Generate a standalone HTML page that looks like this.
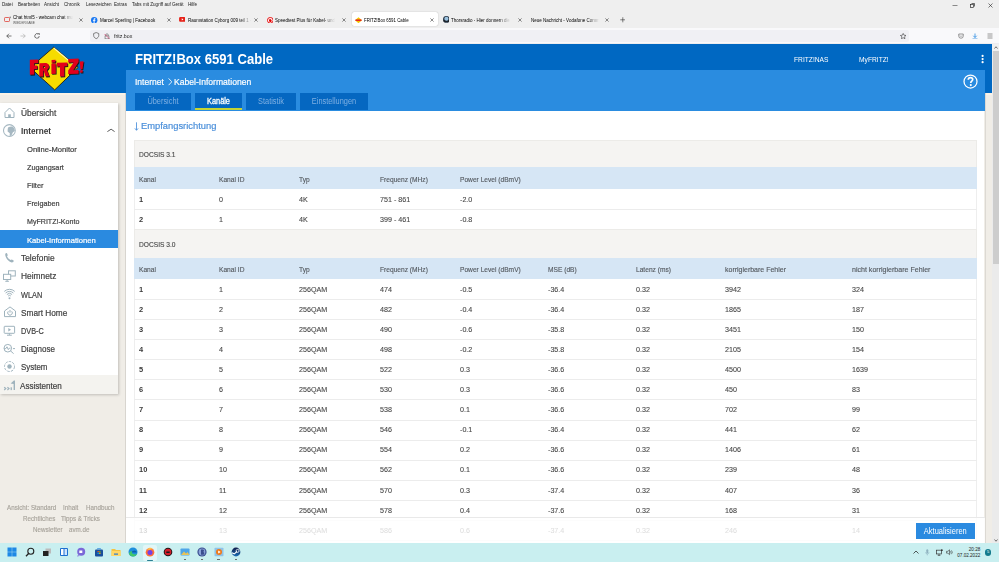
<!DOCTYPE html>
<html><head><meta charset="utf-8">
<style>
*{box-sizing:border-box;margin:0;padding:0}
html,body{width:999px;height:562px;overflow:hidden;background:#f0f0f4;font-family:"Liberation Sans",sans-serif;position:relative}
.a{position:absolute;white-space:nowrap}
</style></head><body>
<div class="a" style="left:0px;top:0px;width:999px;height:28px;background:#efefef;"></div>
<div class="a" style="left:0px;top:28px;width:999px;height:16px;background:#f9f9fb;"></div>
<div class="a" style="left:0px;top:42.6px;width:999px;height:1.4px;background:#ededf0;"></div>
<div class="a" style="left:2.2px;top:1.28px;font-size:5.2px;line-height:6.24px;color:#1a1a1a;font-weight:normal;letter-spacing:0px;transform:scaleX(0.88);transform-origin:0 50%;">Datei</div>
<div class="a" style="left:17.8px;top:1.28px;font-size:5.2px;line-height:6.24px;color:#1a1a1a;font-weight:normal;letter-spacing:0px;transform:scaleX(0.88);transform-origin:0 50%;">Bearbeiten</div>
<div class="a" style="left:44.2px;top:1.28px;font-size:5.2px;line-height:6.24px;color:#1a1a1a;font-weight:normal;letter-spacing:0px;transform:scaleX(0.88);transform-origin:0 50%;">Ansicht</div>
<div class="a" style="left:64.3px;top:1.28px;font-size:5.2px;line-height:6.24px;color:#1a1a1a;font-weight:normal;letter-spacing:0px;transform:scaleX(0.88);transform-origin:0 50%;">Chronik</div>
<div class="a" style="left:85.5px;top:1.28px;font-size:5.2px;line-height:6.24px;color:#1a1a1a;font-weight:normal;letter-spacing:0px;transform:scaleX(0.88);transform-origin:0 50%;">Lesezeichen</div>
<div class="a" style="left:114.3px;top:1.28px;font-size:5.2px;line-height:6.24px;color:#1a1a1a;font-weight:normal;letter-spacing:0px;transform:scaleX(0.88);transform-origin:0 50%;">Extras</div>
<div class="a" style="left:131.7px;top:1.28px;font-size:5.2px;line-height:6.24px;color:#1a1a1a;font-weight:normal;letter-spacing:0px;transform:scaleX(0.88);transform-origin:0 50%;">Tabs mit Zugriff auf Gerät</div>
<div class="a" style="left:188.3px;top:1.28px;font-size:5.2px;line-height:6.24px;color:#1a1a1a;font-weight:normal;letter-spacing:0px;transform:scaleX(0.88);transform-origin:0 50%;">Hilfe</div>
<div class="a" style="left:352px;top:11.9px;width:86px;height:14.4px;background:#ffffff;border-radius:2px;box-shadow:0 0 1.2px rgba(0,0,0,.3)"></div>
<div class="a" style="left:13px;top:13.98px;font-size:5.2px;line-height:6.24px;color:#000;font-weight:normal;letter-spacing:0px;transform:scaleX(0.87);transform-origin:0 50%;"><span style="display:inline-block;max-width:73.8px;overflow:hidden;-webkit-mask-image:linear-gradient(90deg,#000 82%,transparent)">Chat html5 - webcam chat mu</span></div>
<svg class="a" style="left:78.7px;top:17.5px" width="4" height="4" viewBox="0 0 10 10"><path d="M1 1L9 9M9 1L1 9" stroke="#333" stroke-width="1.4"/></svg>
<div class="a" style="left:100px;top:17.48px;font-size:5.2px;line-height:6.24px;color:#000;font-weight:normal;letter-spacing:0px;transform:scaleX(0.875);transform-origin:0 50%;">Marcel Sperling | Facebook</div>
<svg class="a" style="left:166.5px;top:17.5px" width="4" height="4" viewBox="0 0 10 10"><path d="M1 1L9 9M9 1L1 9" stroke="#333" stroke-width="1.4"/></svg>
<div class="a" style="left:187.7px;top:17.48px;font-size:5.2px;line-height:6.24px;color:#000;font-weight:normal;letter-spacing:0px;transform:scaleX(0.87);transform-origin:0 50%;"><span style="display:inline-block;max-width:74.5px;overflow:hidden;-webkit-mask-image:linear-gradient(90deg,#000 82%,transparent)">Raumstation Cyborg 009 teil 1 -</span></div>
<svg class="a" style="left:254px;top:17.5px" width="4" height="4" viewBox="0 0 10 10"><path d="M1 1L9 9M9 1L1 9" stroke="#333" stroke-width="1.4"/></svg>
<div class="a" style="left:275px;top:17.48px;font-size:5.2px;line-height:6.24px;color:#000;font-weight:normal;letter-spacing:0px;transform:scaleX(0.87);transform-origin:0 50%;"><span style="display:inline-block;max-width:75.3px;overflow:hidden;-webkit-mask-image:linear-gradient(90deg,#000 82%,transparent)">Speedtest Plus für Kabel- und</span></div>
<svg class="a" style="left:342px;top:17.5px" width="4" height="4" viewBox="0 0 10 10"><path d="M1 1L9 9M9 1L1 9" stroke="#333" stroke-width="1.4"/></svg>
<div class="a" style="left:363.7px;top:17.48px;font-size:5.2px;line-height:6.24px;color:#000;font-weight:normal;letter-spacing:0px;transform:scaleX(0.84);transform-origin:0 50%;">FRITZ!Box 6591 Cable</div>
<svg class="a" style="left:430px;top:17.5px" width="4" height="4" viewBox="0 0 10 10"><path d="M1 1L9 9M9 1L1 9" stroke="#333" stroke-width="1.4"/></svg>
<div class="a" style="left:451.3px;top:17.48px;font-size:5.2px;line-height:6.24px;color:#000;font-weight:normal;letter-spacing:0px;transform:scaleX(0.87);transform-origin:0 50%;"><span style="display:inline-block;max-width:74.6px;overflow:hidden;-webkit-mask-image:linear-gradient(90deg,#000 82%,transparent)">Thorsradio - Hier donnern die</span></div>
<svg class="a" style="left:517.7px;top:17.5px" width="4" height="4" viewBox="0 0 10 10"><path d="M1 1L9 9M9 1L1 9" stroke="#333" stroke-width="1.4"/></svg>
<div class="a" style="left:530.7px;top:17.48px;font-size:5.2px;line-height:6.24px;color:#000;font-weight:normal;letter-spacing:0px;transform:scaleX(0.87);transform-origin:0 50%;"><span style="display:inline-block;max-width:84.0px;overflow:hidden;-webkit-mask-image:linear-gradient(90deg,#000 82%,transparent)">Neue Nachricht - Vodafone Comm</span></div>
<svg class="a" style="left:605.3px;top:17.5px" width="4" height="4" viewBox="0 0 10 10"><path d="M1 1L9 9M9 1L1 9" stroke="#333" stroke-width="1.4"/></svg>
<div class="a" style="left:13px;top:21.04px;font-size:3.6px;line-height:4.32px;color:#555;font-weight:normal;letter-spacing:0px;transform:scaleX(0.9);transform-origin:0 50%;">WIEDERGABE</div>
<svg class="a" style="left:3.5px;top:16px" width="7" height="7" viewBox="0 0 14 14"><rect x="1" y="3" width="10" height="8" rx="1.5" fill="none" stroke="#e0413a" stroke-width="1.6"/><path d="M11 2l2-1v4z" fill="#333"/></svg>
<svg class="a" style="left:91.4px;top:16.5px" width="6.4" height="6.4" viewBox="0 0 10 10"><circle cx="5" cy="5" r="5" fill="#1877f2"/><path d="M5.6 10V6.4h1.2l.2-1.4H5.6v-.9c0-.4.1-.7.7-.7h.7V2.2c-.1 0-.6-.1-1.1-.1-1.1 0-1.8.7-1.8 1.9V5H3v1.4h1.1V10z" fill="#fff"/></svg>
<svg class="a" style="left:178.5px;top:17.3px" width="6.6" height="4.8" viewBox="0 0 12 9"><rect width="12" height="9" rx="2.2" fill="#e62117"/><path d="M5 2.5v4l3.2-2z" fill="#fff"/></svg>
<svg class="a" style="left:266.8px;top:16.6px" width="6.6" height="6.6" viewBox="0 0 10 10"><circle cx="5" cy="5" r="4.3" fill="#fff" stroke="#e60000" stroke-width="1.4"/><path d="M5.6 2.6C4 2.7 3 3.9 3 5.2c0 1.4 1 2.3 2.2 2.3 1.1 0 1.9-.8 1.9-1.9 0-1.1-.8-1.5-1.5-1.7 0-.5.2-.9 0-1.3z" fill="#e60000"/></svg>
<svg class="a" style="left:354.5px;top:16.5px" width="7" height="6.4" viewBox="0 0 14 12"><path d="M7 0L14 6 7 12 0 6z" fill="#f5c800"/><path d="M1 4.5h12v3H1z" fill="#e31e24"/></svg>
<svg class="a" style="left:442.6px;top:16.3px" width="6.8" height="6.8" viewBox="0 0 10 10"><circle cx="5" cy="5" r="5" fill="#2b3a4a"/><circle cx="5" cy="4" r="3" fill="#9cc3e0"/><path d="M1 6c2 2 6 2 8 0v2H1z" fill="#111"/></svg>
<svg class="a" style="left:619.5px;top:17px" width="5.6" height="5.6" viewBox="0 0 10 10"><path d="M5 0.5v9M0.5 5h9" stroke="#333" stroke-width="1.1"/></svg>
<svg class="a" style="left:951.5px;top:3px" width="6" height="5" viewBox="0 0 12 10"><path d="M1 5h10" stroke="#222" stroke-width="1"/></svg>
<svg class="a" style="left:969.5px;top:2.8px" width="5" height="5" viewBox="0 0 10 10"><rect x="1" y="3" width="6" height="6" fill="none" stroke="#222" stroke-width="1.3"/><path d="M3 1h6v6" fill="none" stroke="#222" stroke-width="1.3"/></svg>
<svg class="a" style="left:987.5px;top:2.8px" width="5" height="5" viewBox="0 0 10 10"><path d="M1 1L9 9M9 1L1 9" stroke="#222" stroke-width="1.2"/></svg>
<svg class="a" style="left:6px;top:33px" width="6" height="6" viewBox="0 0 12 12"><path d="M11 6H1.5M6 1.5L1.5 6 6 10.5" fill="none" stroke="#333" stroke-width="1.3"/></svg>
<svg class="a" style="left:20.3px;top:33px" width="6" height="6" viewBox="0 0 12 12"><path d="M1 6h9.5M6 1.5L10.5 6 6 10.5" fill="none" stroke="#aaa" stroke-width="1.3"/></svg>
<svg class="a" style="left:34.3px;top:33px" width="6" height="6" viewBox="0 0 12 12"><path d="M10.5 6A4.5 4.5 0 1 1 8.5 2.2" fill="none" stroke="#333" stroke-width="1.3"/><path d="M7 0.5h3.5V4" fill="none" stroke="#333" stroke-width="1.3"/></svg>
<div class="a" style="left:90px;top:30px;width:819px;height:12px;background:#f0f0f4;border-radius:2px"></div>
<svg class="a" style="left:93.2px;top:32.4px" width="6.4" height="7.2" viewBox="0 0 8 9"><path d="M4 .7L7.2 1.9V4.3C7.2 6.3 5.8 7.6 4 8.3 2.2 7.6.8 6.3.8 4.3V1.9Z" fill="none" stroke="#555" stroke-width=".9"/></svg>
<svg class="a" style="left:104.2px;top:33px" width="6" height="6.4" viewBox="0 0 12 13"><rect x="2" y="6" width="8" height="6" fill="none" stroke="#555" stroke-width="1.1"/><path d="M3.5 6V4a2.5 2.5 0 0 1 5 0v2" fill="none" stroke="#555" stroke-width="1.1"/><path d="M1 2L11 12" stroke="#e0245e" stroke-width="1.2"/></svg>
<div class="a" style="left:114px;top:32.72px;font-size:5.8px;line-height:6.96px;color:#222;font-weight:normal;letter-spacing:0px;transform:scaleX(0.9);transform-origin:0 50%;">fritz.box</div>
<svg class="a" style="left:899.5px;top:32.5px" width="6.4" height="6.4" viewBox="0 0 12 12"><path d="M6 .8l1.6 3.4 3.7.4-2.8 2.5.8 3.7L6 8.9 2.7 10.8l.8-3.7L.7 4.6l3.7-.4z" fill="none" stroke="#333" stroke-width="1.1"/></svg>
<svg class="a" style="left:958.3px;top:32.8px" width="6" height="6" viewBox="0 0 12 12"><path d="M1.5 2h9v4a4.5 4.5 0 0 1-9 0z" fill="none" stroke="#555" stroke-width="1.2"/><path d="M4 5l2 2 2-2" fill="none" stroke="#555" stroke-width="1.2"/></svg>
<svg class="a" style="left:972.3px;top:32.5px" width="6" height="6.5" viewBox="0 0 12 13"><path d="M6 1v8M2.5 5.5L6 9l3.5-3.5M1 12h10" fill="none" stroke="#0b7be0" stroke-width="1.4"/></svg>
<svg class="a" style="left:986.5px;top:33px" width="6" height="6" viewBox="0 0 12 12"><path d="M1 2h10M1 6h10M1 10h10" stroke="#555" stroke-width="1.2"/></svg>
<div class="a" style="left:0px;top:44px;width:992px;height:499px;background:#f0ede7;"></div>
<div class="a" style="left:0px;top:44px;width:992px;height:49px;background:#0068c2;"></div>
<div class="a" style="left:0px;top:93px;width:126px;height:1.8px;background:#faf2e6;"></div>
<div class="a" style="left:985px;top:93px;width:7px;height:1.8px;background:#faf2e6;"></div>
<svg class="a" style="left:24px;top:45px" width="64" height="48" viewBox="0 0 64 48">
<path d="M29.8 2.1 L54.2 22.3 L30.7 44.9 L6.1 22.7 Z" fill="#f6dc00" stroke="#1a1a1a" stroke-width="0.9"/>
<path d="M29.8 3 L52.5 22" stroke="#fff7b0" stroke-width="1.1" fill="none"/>
<g transform="translate(0.8,0.9)" fill="#1a1a1a">
<path d="M5.8 14.7 L14.3 14.4 L14.3 18.1 L10.2 18.3 L10.2 20.5 L13.3 20.4 L13.3 23.9 L10.2 24 L10.2 29.6 L5.8 29.8 Z"/>
<path d="M15.3 18.2 L21 18 C24.8 18 25.3 20.8 24.8 22.6 C24.4 23.8 23.7 24.5 22.9 24.9 L25.4 31.3 L21.6 31.5 L19.8 25.8 L19.3 25.8 L19.3 31.5 L15.3 31.6 Z M19.3 21 L19.3 23.2 L20.4 23.1 C21.3 23 21.3 20.9 20.4 20.9 Z"/>
<path d="M27.4 18.6 L31.8 18.4 L31.8 28.7 L27.4 28.9 Z M27.6 15 L31.6 14.8 L31.4 17.6 L27.5 17.8 Z"/>
<path d="M32.8 17.8 L43.4 17.6 L43.4 21.2 L40.4 21.3 L40.4 31.4 L36 31.6 L36 21.4 L32.8 21.5 Z"/>
<path d="M44.2 13.9 L54.6 13.6 L54.6 17.1 L49.2 25.2 L54.6 25 L54.6 28.7 L44.2 29 L44.2 25.5 L49.6 17.4 L44.2 17.6 Z"/>
<path d="M55.8 16.6 L59.6 16.3 L58.5 24.2 L56.4 24.4 Z M56.2 25.3 L58.7 25.1 L58.6 27.5 L56.1 27.7 Z"/>
</g>
<g fill="#e2001a">
<path d="M5.8 14.7 L14.3 14.4 L14.3 18.1 L10.2 18.3 L10.2 20.5 L13.3 20.4 L13.3 23.9 L10.2 24 L10.2 29.6 L5.8 29.8 Z"/>
<path d="M15.3 18.2 L21 18 C24.8 18 25.3 20.8 24.8 22.6 C24.4 23.8 23.7 24.5 22.9 24.9 L25.4 31.3 L21.6 31.5 L19.8 25.8 L19.3 25.8 L19.3 31.5 L15.3 31.6 Z M19.3 21 L19.3 23.2 L20.4 23.1 C21.3 23 21.3 20.9 20.4 20.9 Z"/>
<path d="M27.4 18.6 L31.8 18.4 L31.8 28.7 L27.4 28.9 Z M27.6 15 L31.6 14.8 L31.4 17.6 L27.5 17.8 Z"/>
<path d="M32.8 17.8 L43.4 17.6 L43.4 21.2 L40.4 21.3 L40.4 31.4 L36 31.6 L36 21.4 L32.8 21.5 Z"/>
<path d="M44.2 13.9 L54.6 13.6 L54.6 17.1 L49.2 25.2 L54.6 25 L54.6 28.7 L44.2 29 L44.2 25.5 L49.6 17.4 L44.2 17.6 Z"/>
<path d="M55.8 16.6 L59.6 16.3 L58.5 24.2 L56.4 24.4 Z M56.2 25.3 L58.7 25.1 L58.6 27.5 L56.1 27.7 Z"/>
</g></svg>
<div class="a" style="left:135px;top:50.70px;font-size:14px;line-height:16.80px;color:#ffffff;font-weight:bold;letter-spacing:0px;transform:scaleX(0.934);transform-origin:0 50%;">FRITZ!Box 6591 Cable</div>
<div class="a" style="left:793.6px;top:54.64px;font-size:7.6px;line-height:9.12px;color:#ffffff;font-weight:normal;letter-spacing:0px;transform:scaleX(0.88);transform-origin:0 50%;">FRITZ!NAS</div>
<div class="a" style="left:859px;top:54.64px;font-size:7.6px;line-height:9.12px;color:#ffffff;font-weight:normal;letter-spacing:0px;transform:scaleX(0.88);transform-origin:0 50%;">MyFRITZ!</div>
<svg class="a" style="left:980px;top:53px" width="5" height="11" viewBox="0 0 5 11"><circle cx="2.6" cy="2.9" r="1.1" fill="#fff"/><circle cx="2.6" cy="6.1" r="1.1" fill="#fff"/><circle cx="2.6" cy="9.2" r="1.1" fill="#fff"/></svg>
<div class="a" style="left:126px;top:70px;width:858.6px;height:40.6px;background:#2a8ce0;"></div>
<div class="a" style="left:135px;top:75.98px;font-size:9.7px;line-height:11.64px;color:#ffffff;font-weight:normal;letter-spacing:0px;transform:scaleX(0.88);transform-origin:0 50%;-webkit-text-stroke:0.2px #fff;">Internet</div>
<div class="a" style="left:174px;top:75.98px;font-size:9.7px;line-height:11.64px;color:#ffffff;font-weight:normal;letter-spacing:0px;transform:scaleX(0.885);transform-origin:0 50%;-webkit-text-stroke:0.2px #fff;">Kabel-Informationen</div>
<svg class="a" style="left:168px;top:78px" width="4.4" height="7.6" viewBox="0 0 4.4 7.6"><path d="M.6 .4L3.8 3.8 .6 7.2" fill="none" stroke="#fff" stroke-width="0.85"/></svg>
<svg class="a" style="left:963.1px;top:73.6px" width="15" height="15" viewBox="0 0 15 15"><circle cx="7.5" cy="7.5" r="6.5" fill="none" stroke="#fff" stroke-width="1.25"/><path d="M5.3 5.8C5.3 4.4 6.3 3.7 7.5 3.7c1.3 0 2.2.8 2.2 1.9 0 1.5-1.9 1.6-1.9 3.1v.3" fill="none" stroke="#fff" stroke-width="1.7"/><circle cx="7.8" cy="11.1" r="1.05" fill="#fff"/></svg>
<div class="a" style="left:135px;top:93.2px;width:56px;height:17.1px;background:#0567c1;"></div>
<div class="a" style="left:135px;top:95.5px;width:56px;text-align:center;font-size:8.4px;line-height:11px;color:#7fb0e3;transform:scaleX(0.88);">Übersicht</div>
<div class="a" style="left:195px;top:93.2px;width:47px;height:17.1px;background:#0567c1;"></div>
<div class="a" style="left:195px;top:95.5px;width:47px;text-align:center;font-size:8.4px;line-height:11px;color:#ffffff;transform:scaleX(0.88);-webkit-text-stroke:0.3px #fff;">Kanäle</div>
<div class="a" style="left:195px;top:108.1px;width:47px;height:2.1px;background:#c4d334;"></div>
<div class="a" style="left:246px;top:93.2px;width:50px;height:17.1px;background:#0567c1;"></div>
<div class="a" style="left:246px;top:95.5px;width:50px;text-align:center;font-size:8.4px;line-height:11px;color:#7fb0e3;transform:scaleX(0.88);">Statistik</div>
<div class="a" style="left:300px;top:93.2px;width:68px;height:17.1px;background:#0567c1;"></div>
<div class="a" style="left:300px;top:95.5px;width:68px;text-align:center;font-size:8.4px;line-height:11px;color:#7fb0e3;transform:scaleX(0.88);">Einstellungen</div>
<div class="a" style="left:126px;top:110.6px;width:858.4px;height:432.4px;background:#ffffff;"></div>
<div class="a" style="left:125px;top:93px;width:1px;height:450px;background:#d8d5cf;"></div>
<div class="a" style="left:985px;top:93px;width:1px;height:450px;background:#dcd9d3;"></div>
<div class="a" style="left:141.2px;top:120.28px;font-size:9.7px;line-height:11.64px;color:#4a8fda;font-weight:normal;letter-spacing:0px;transform:scaleX(0.965);transform-origin:0 50%;-webkit-text-stroke:0.2px #4a8fda;">Empfangsrichtung</div>
<svg class="a" style="left:134px;top:122.2px" width="5" height="9" viewBox="0 0 5 9"><path d="M2.5 .3V8.1M.9 6.4L2.5 8.3 4.1 6.4" fill="none" stroke="#4a8fda" stroke-width="0.85"/></svg>
<div class="a" style="left:134px;top:139.8px;width:843px;height:27.599999999999994px;background:#f5f4f2;border:1px solid #ecebe8;border-bottom:none"></div>
<div class="a" style="left:139px;top:149.82px;font-size:7.8px;line-height:9.36px;color:#4a4a4a;font-weight:normal;letter-spacing:0px;transform:scaleX(0.85);transform-origin:0 50%;-webkit-text-stroke:0.15px #4a4a4a;">DOCSIS 3.1</div>
<div class="a" style="left:134px;top:167.4px;width:843px;height:21.900000000000006px;background:#d6e6f5;"></div>
<div class="a" style="left:139px;top:174.57px;font-size:7.8px;line-height:9.36px;color:#555a60;font-weight:normal;letter-spacing:0px;transform:scaleX(0.85);transform-origin:0 50%;-webkit-text-stroke:0.15px #555a60;">Kanal</div>
<div class="a" style="left:219px;top:174.57px;font-size:7.8px;line-height:9.36px;color:#555a60;font-weight:normal;letter-spacing:0px;transform:scaleX(0.85);transform-origin:0 50%;-webkit-text-stroke:0.15px #555a60;">Kanal ID</div>
<div class="a" style="left:299px;top:174.57px;font-size:7.8px;line-height:9.36px;color:#555a60;font-weight:normal;letter-spacing:0px;transform:scaleX(0.85);transform-origin:0 50%;-webkit-text-stroke:0.15px #555a60;">Typ</div>
<div class="a" style="left:379.7px;top:174.57px;font-size:7.8px;line-height:9.36px;color:#555a60;font-weight:normal;letter-spacing:0px;transform:scaleX(0.85);transform-origin:0 50%;-webkit-text-stroke:0.15px #555a60;">Frequenz (MHz)</div>
<div class="a" style="left:460px;top:174.57px;font-size:7.8px;line-height:9.36px;color:#555a60;font-weight:normal;letter-spacing:0px;transform:scaleX(0.85);transform-origin:0 50%;-webkit-text-stroke:0.15px #555a60;">Power Level (dBmV)</div>
<div class="a" style="left:134px;top:189.3px;width:843px;height:20px;background:#ffffff;border-left:1px solid #eeeeee;border-right:1px solid #eeeeee"></div>
<div class="a" style="left:139px;top:194.94px;font-size:8.1px;line-height:9.72px;color:#3a3a3a;font-weight:bold;letter-spacing:0px;transform:scaleX(0.92);transform-origin:0 50%;">1</div>
<div class="a" style="left:219px;top:194.94px;font-size:8.1px;line-height:9.72px;color:#484848;font-weight:normal;letter-spacing:0px;transform:scaleX(0.885);transform-origin:0 50%;-webkit-text-stroke:0.12px #484848;">0</div>
<div class="a" style="left:299px;top:194.94px;font-size:8.1px;line-height:9.72px;color:#484848;font-weight:normal;letter-spacing:0px;transform:scaleX(0.885);transform-origin:0 50%;-webkit-text-stroke:0.12px #484848;">4K</div>
<div class="a" style="left:379.7px;top:194.94px;font-size:8.1px;line-height:9.72px;color:#484848;font-weight:normal;letter-spacing:0px;transform:scaleX(0.885);transform-origin:0 50%;-webkit-text-stroke:0.12px #484848;">751 - 861</div>
<div class="a" style="left:460px;top:194.94px;font-size:8.1px;line-height:9.72px;color:#484848;font-weight:normal;letter-spacing:0px;transform:scaleX(0.885);transform-origin:0 50%;-webkit-text-stroke:0.12px #484848;">-2.0</div>
<div class="a" style="left:134px;top:209.4px;width:843px;height:19.6px;background:#ffffff;border-left:1px solid #eeeeee;border-right:1px solid #eeeeee"></div>
<div class="a" style="left:134px;top:209.4px;width:843px;height:1px;background:#ececec;"></div>
<div class="a" style="left:139px;top:214.84px;font-size:8.1px;line-height:9.72px;color:#3a3a3a;font-weight:bold;letter-spacing:0px;transform:scaleX(0.92);transform-origin:0 50%;">2</div>
<div class="a" style="left:219px;top:214.84px;font-size:8.1px;line-height:9.72px;color:#484848;font-weight:normal;letter-spacing:0px;transform:scaleX(0.885);transform-origin:0 50%;-webkit-text-stroke:0.12px #484848;">1</div>
<div class="a" style="left:299px;top:214.84px;font-size:8.1px;line-height:9.72px;color:#484848;font-weight:normal;letter-spacing:0px;transform:scaleX(0.885);transform-origin:0 50%;-webkit-text-stroke:0.12px #484848;">4K</div>
<div class="a" style="left:379.7px;top:214.84px;font-size:8.1px;line-height:9.72px;color:#484848;font-weight:normal;letter-spacing:0px;transform:scaleX(0.885);transform-origin:0 50%;-webkit-text-stroke:0.12px #484848;">399 - 461</div>
<div class="a" style="left:460px;top:214.84px;font-size:8.1px;line-height:9.72px;color:#484848;font-weight:normal;letter-spacing:0px;transform:scaleX(0.885);transform-origin:0 50%;-webkit-text-stroke:0.12px #484848;">-0.8</div>
<div class="a" style="left:134px;top:228.9px;width:843px;height:29.099999999999994px;background:#f5f4f2;border:1px solid #ecebe8;border-bottom:none"></div>
<div class="a" style="left:139px;top:239.67px;font-size:7.8px;line-height:9.36px;color:#4a4a4a;font-weight:normal;letter-spacing:0px;transform:scaleX(0.85);transform-origin:0 50%;-webkit-text-stroke:0.15px #4a4a4a;">DOCSIS 3.0</div>
<div class="a" style="left:134px;top:258px;width:843px;height:20.80000000000001px;background:#d6e6f5;"></div>
<div class="a" style="left:139px;top:264.62px;font-size:7.8px;line-height:9.36px;color:#555a60;font-weight:normal;letter-spacing:0px;transform:scaleX(0.85);transform-origin:0 50%;-webkit-text-stroke:0.15px #555a60;">Kanal</div>
<div class="a" style="left:219px;top:264.62px;font-size:7.8px;line-height:9.36px;color:#555a60;font-weight:normal;letter-spacing:0px;transform:scaleX(0.85);transform-origin:0 50%;-webkit-text-stroke:0.15px #555a60;">Kanal ID</div>
<div class="a" style="left:299px;top:264.62px;font-size:7.8px;line-height:9.36px;color:#555a60;font-weight:normal;letter-spacing:0px;transform:scaleX(0.85);transform-origin:0 50%;-webkit-text-stroke:0.15px #555a60;">Typ</div>
<div class="a" style="left:379.7px;top:264.62px;font-size:7.8px;line-height:9.36px;color:#555a60;font-weight:normal;letter-spacing:0px;transform:scaleX(0.85);transform-origin:0 50%;-webkit-text-stroke:0.15px #555a60;">Frequenz (MHz)</div>
<div class="a" style="left:460px;top:264.62px;font-size:7.8px;line-height:9.36px;color:#555a60;font-weight:normal;letter-spacing:0px;transform:scaleX(0.85);transform-origin:0 50%;-webkit-text-stroke:0.15px #555a60;">Power Level (dBmV)</div>
<div class="a" style="left:548.1px;top:264.62px;font-size:7.8px;line-height:9.36px;color:#555a60;font-weight:normal;letter-spacing:0px;transform:scaleX(0.85);transform-origin:0 50%;-webkit-text-stroke:0.15px #555a60;">MSE (dB)</div>
<div class="a" style="left:636.4px;top:264.62px;font-size:7.8px;line-height:9.36px;color:#555a60;font-weight:normal;letter-spacing:0px;transform:scaleX(0.85);transform-origin:0 50%;-webkit-text-stroke:0.15px #555a60;">Latenz (ms)</div>
<div class="a" style="left:724.7px;top:264.62px;font-size:7.8px;line-height:9.36px;color:#555a60;font-weight:normal;letter-spacing:0px;transform:scaleX(0.896);transform-origin:0 50%;-webkit-text-stroke:0.15px #555a60;">korrigierbare Fehler</div>
<div class="a" style="left:852.2px;top:264.62px;font-size:7.8px;line-height:9.36px;color:#555a60;font-weight:normal;letter-spacing:0px;transform:scaleX(0.905);transform-origin:0 50%;-webkit-text-stroke:0.15px #555a60;">nicht korrigierbare Fehler</div>
<div class="a" style="left:134px;top:278.8px;width:843px;height:20.52px;background:#ffffff;border-left:1px solid #eeeeee;border-right:1px solid #eeeeee"></div>
<div class="a" style="left:139px;top:284.70px;font-size:8.1px;line-height:9.72px;color:#3a3a3a;font-weight:bold;letter-spacing:0px;transform:scaleX(0.92);transform-origin:0 50%;">1</div>
<div class="a" style="left:219px;top:284.70px;font-size:8.1px;line-height:9.72px;color:#484848;font-weight:normal;letter-spacing:0px;transform:scaleX(0.885);transform-origin:0 50%;-webkit-text-stroke:0.12px #484848;">1</div>
<div class="a" style="left:299px;top:284.70px;font-size:8.1px;line-height:9.72px;color:#484848;font-weight:normal;letter-spacing:0px;transform:scaleX(0.885);transform-origin:0 50%;-webkit-text-stroke:0.12px #484848;">256QAM</div>
<div class="a" style="left:379.7px;top:284.70px;font-size:8.1px;line-height:9.72px;color:#484848;font-weight:normal;letter-spacing:0px;transform:scaleX(0.885);transform-origin:0 50%;-webkit-text-stroke:0.12px #484848;">474</div>
<div class="a" style="left:460px;top:284.70px;font-size:8.1px;line-height:9.72px;color:#484848;font-weight:normal;letter-spacing:0px;transform:scaleX(0.885);transform-origin:0 50%;-webkit-text-stroke:0.12px #484848;">-0.5</div>
<div class="a" style="left:548.1px;top:284.70px;font-size:8.1px;line-height:9.72px;color:#484848;font-weight:normal;letter-spacing:0px;transform:scaleX(0.885);transform-origin:0 50%;-webkit-text-stroke:0.12px #484848;">-36.4</div>
<div class="a" style="left:636.4px;top:284.70px;font-size:8.1px;line-height:9.72px;color:#484848;font-weight:normal;letter-spacing:0px;transform:scaleX(0.885);transform-origin:0 50%;-webkit-text-stroke:0.12px #484848;">0.32</div>
<div class="a" style="left:724.7px;top:284.70px;font-size:8.1px;line-height:9.72px;color:#484848;font-weight:normal;letter-spacing:0px;transform:scaleX(0.885);transform-origin:0 50%;-webkit-text-stroke:0.12px #484848;">3942</div>
<div class="a" style="left:852.2px;top:284.70px;font-size:8.1px;line-height:9.72px;color:#484848;font-weight:normal;letter-spacing:0px;transform:scaleX(0.885);transform-origin:0 50%;-webkit-text-stroke:0.12px #484848;">324</div>
<div class="a" style="left:134px;top:298.8px;width:843px;height:20.12px;background:#ffffff;border-left:1px solid #eeeeee;border-right:1px solid #eeeeee"></div>
<div class="a" style="left:134px;top:298.8px;width:843px;height:1px;background:#ececec;"></div>
<div class="a" style="left:139px;top:304.50px;font-size:8.1px;line-height:9.72px;color:#3a3a3a;font-weight:bold;letter-spacing:0px;transform:scaleX(0.92);transform-origin:0 50%;">2</div>
<div class="a" style="left:219px;top:304.50px;font-size:8.1px;line-height:9.72px;color:#484848;font-weight:normal;letter-spacing:0px;transform:scaleX(0.885);transform-origin:0 50%;-webkit-text-stroke:0.12px #484848;">2</div>
<div class="a" style="left:299px;top:304.50px;font-size:8.1px;line-height:9.72px;color:#484848;font-weight:normal;letter-spacing:0px;transform:scaleX(0.885);transform-origin:0 50%;-webkit-text-stroke:0.12px #484848;">256QAM</div>
<div class="a" style="left:379.7px;top:304.50px;font-size:8.1px;line-height:9.72px;color:#484848;font-weight:normal;letter-spacing:0px;transform:scaleX(0.885);transform-origin:0 50%;-webkit-text-stroke:0.12px #484848;">482</div>
<div class="a" style="left:460px;top:304.50px;font-size:8.1px;line-height:9.72px;color:#484848;font-weight:normal;letter-spacing:0px;transform:scaleX(0.885);transform-origin:0 50%;-webkit-text-stroke:0.12px #484848;">-0.4</div>
<div class="a" style="left:548.1px;top:304.50px;font-size:8.1px;line-height:9.72px;color:#484848;font-weight:normal;letter-spacing:0px;transform:scaleX(0.885);transform-origin:0 50%;-webkit-text-stroke:0.12px #484848;">-36.4</div>
<div class="a" style="left:636.4px;top:304.50px;font-size:8.1px;line-height:9.72px;color:#484848;font-weight:normal;letter-spacing:0px;transform:scaleX(0.885);transform-origin:0 50%;-webkit-text-stroke:0.12px #484848;">0.32</div>
<div class="a" style="left:724.7px;top:304.50px;font-size:8.1px;line-height:9.72px;color:#484848;font-weight:normal;letter-spacing:0px;transform:scaleX(0.885);transform-origin:0 50%;-webkit-text-stroke:0.12px #484848;">1865</div>
<div class="a" style="left:852.2px;top:304.50px;font-size:8.1px;line-height:9.72px;color:#484848;font-weight:normal;letter-spacing:0px;transform:scaleX(0.885);transform-origin:0 50%;-webkit-text-stroke:0.12px #484848;">187</div>
<div class="a" style="left:134px;top:318.92px;width:843px;height:20.12px;background:#ffffff;border-left:1px solid #eeeeee;border-right:1px solid #eeeeee"></div>
<div class="a" style="left:134px;top:318.92px;width:843px;height:1px;background:#ececec;"></div>
<div class="a" style="left:139px;top:324.62px;font-size:8.1px;line-height:9.72px;color:#3a3a3a;font-weight:bold;letter-spacing:0px;transform:scaleX(0.92);transform-origin:0 50%;">3</div>
<div class="a" style="left:219px;top:324.62px;font-size:8.1px;line-height:9.72px;color:#484848;font-weight:normal;letter-spacing:0px;transform:scaleX(0.885);transform-origin:0 50%;-webkit-text-stroke:0.12px #484848;">3</div>
<div class="a" style="left:299px;top:324.62px;font-size:8.1px;line-height:9.72px;color:#484848;font-weight:normal;letter-spacing:0px;transform:scaleX(0.885);transform-origin:0 50%;-webkit-text-stroke:0.12px #484848;">256QAM</div>
<div class="a" style="left:379.7px;top:324.62px;font-size:8.1px;line-height:9.72px;color:#484848;font-weight:normal;letter-spacing:0px;transform:scaleX(0.885);transform-origin:0 50%;-webkit-text-stroke:0.12px #484848;">490</div>
<div class="a" style="left:460px;top:324.62px;font-size:8.1px;line-height:9.72px;color:#484848;font-weight:normal;letter-spacing:0px;transform:scaleX(0.885);transform-origin:0 50%;-webkit-text-stroke:0.12px #484848;">-0.6</div>
<div class="a" style="left:548.1px;top:324.62px;font-size:8.1px;line-height:9.72px;color:#484848;font-weight:normal;letter-spacing:0px;transform:scaleX(0.885);transform-origin:0 50%;-webkit-text-stroke:0.12px #484848;">-35.8</div>
<div class="a" style="left:636.4px;top:324.62px;font-size:8.1px;line-height:9.72px;color:#484848;font-weight:normal;letter-spacing:0px;transform:scaleX(0.885);transform-origin:0 50%;-webkit-text-stroke:0.12px #484848;">0.32</div>
<div class="a" style="left:724.7px;top:324.62px;font-size:8.1px;line-height:9.72px;color:#484848;font-weight:normal;letter-spacing:0px;transform:scaleX(0.885);transform-origin:0 50%;-webkit-text-stroke:0.12px #484848;">3451</div>
<div class="a" style="left:852.2px;top:324.62px;font-size:8.1px;line-height:9.72px;color:#484848;font-weight:normal;letter-spacing:0px;transform:scaleX(0.885);transform-origin:0 50%;-webkit-text-stroke:0.12px #484848;">150</div>
<div class="a" style="left:134px;top:339.04px;width:843px;height:20.12px;background:#ffffff;border-left:1px solid #eeeeee;border-right:1px solid #eeeeee"></div>
<div class="a" style="left:134px;top:339.04px;width:843px;height:1px;background:#ececec;"></div>
<div class="a" style="left:139px;top:344.74px;font-size:8.1px;line-height:9.72px;color:#3a3a3a;font-weight:bold;letter-spacing:0px;transform:scaleX(0.92);transform-origin:0 50%;">4</div>
<div class="a" style="left:219px;top:344.74px;font-size:8.1px;line-height:9.72px;color:#484848;font-weight:normal;letter-spacing:0px;transform:scaleX(0.885);transform-origin:0 50%;-webkit-text-stroke:0.12px #484848;">4</div>
<div class="a" style="left:299px;top:344.74px;font-size:8.1px;line-height:9.72px;color:#484848;font-weight:normal;letter-spacing:0px;transform:scaleX(0.885);transform-origin:0 50%;-webkit-text-stroke:0.12px #484848;">256QAM</div>
<div class="a" style="left:379.7px;top:344.74px;font-size:8.1px;line-height:9.72px;color:#484848;font-weight:normal;letter-spacing:0px;transform:scaleX(0.885);transform-origin:0 50%;-webkit-text-stroke:0.12px #484848;">498</div>
<div class="a" style="left:460px;top:344.74px;font-size:8.1px;line-height:9.72px;color:#484848;font-weight:normal;letter-spacing:0px;transform:scaleX(0.885);transform-origin:0 50%;-webkit-text-stroke:0.12px #484848;">-0.2</div>
<div class="a" style="left:548.1px;top:344.74px;font-size:8.1px;line-height:9.72px;color:#484848;font-weight:normal;letter-spacing:0px;transform:scaleX(0.885);transform-origin:0 50%;-webkit-text-stroke:0.12px #484848;">-35.8</div>
<div class="a" style="left:636.4px;top:344.74px;font-size:8.1px;line-height:9.72px;color:#484848;font-weight:normal;letter-spacing:0px;transform:scaleX(0.885);transform-origin:0 50%;-webkit-text-stroke:0.12px #484848;">0.32</div>
<div class="a" style="left:724.7px;top:344.74px;font-size:8.1px;line-height:9.72px;color:#484848;font-weight:normal;letter-spacing:0px;transform:scaleX(0.885);transform-origin:0 50%;-webkit-text-stroke:0.12px #484848;">2105</div>
<div class="a" style="left:852.2px;top:344.74px;font-size:8.1px;line-height:9.72px;color:#484848;font-weight:normal;letter-spacing:0px;transform:scaleX(0.885);transform-origin:0 50%;-webkit-text-stroke:0.12px #484848;">154</div>
<div class="a" style="left:134px;top:359.16px;width:843px;height:20.12px;background:#ffffff;border-left:1px solid #eeeeee;border-right:1px solid #eeeeee"></div>
<div class="a" style="left:134px;top:359.16px;width:843px;height:1px;background:#ececec;"></div>
<div class="a" style="left:139px;top:364.86px;font-size:8.1px;line-height:9.72px;color:#3a3a3a;font-weight:bold;letter-spacing:0px;transform:scaleX(0.92);transform-origin:0 50%;">5</div>
<div class="a" style="left:219px;top:364.86px;font-size:8.1px;line-height:9.72px;color:#484848;font-weight:normal;letter-spacing:0px;transform:scaleX(0.885);transform-origin:0 50%;-webkit-text-stroke:0.12px #484848;">5</div>
<div class="a" style="left:299px;top:364.86px;font-size:8.1px;line-height:9.72px;color:#484848;font-weight:normal;letter-spacing:0px;transform:scaleX(0.885);transform-origin:0 50%;-webkit-text-stroke:0.12px #484848;">256QAM</div>
<div class="a" style="left:379.7px;top:364.86px;font-size:8.1px;line-height:9.72px;color:#484848;font-weight:normal;letter-spacing:0px;transform:scaleX(0.885);transform-origin:0 50%;-webkit-text-stroke:0.12px #484848;">522</div>
<div class="a" style="left:460px;top:364.86px;font-size:8.1px;line-height:9.72px;color:#484848;font-weight:normal;letter-spacing:0px;transform:scaleX(0.885);transform-origin:0 50%;-webkit-text-stroke:0.12px #484848;">0.3</div>
<div class="a" style="left:548.1px;top:364.86px;font-size:8.1px;line-height:9.72px;color:#484848;font-weight:normal;letter-spacing:0px;transform:scaleX(0.885);transform-origin:0 50%;-webkit-text-stroke:0.12px #484848;">-36.6</div>
<div class="a" style="left:636.4px;top:364.86px;font-size:8.1px;line-height:9.72px;color:#484848;font-weight:normal;letter-spacing:0px;transform:scaleX(0.885);transform-origin:0 50%;-webkit-text-stroke:0.12px #484848;">0.32</div>
<div class="a" style="left:724.7px;top:364.86px;font-size:8.1px;line-height:9.72px;color:#484848;font-weight:normal;letter-spacing:0px;transform:scaleX(0.885);transform-origin:0 50%;-webkit-text-stroke:0.12px #484848;">4500</div>
<div class="a" style="left:852.2px;top:364.86px;font-size:8.1px;line-height:9.72px;color:#484848;font-weight:normal;letter-spacing:0px;transform:scaleX(0.885);transform-origin:0 50%;-webkit-text-stroke:0.12px #484848;">1639</div>
<div class="a" style="left:134px;top:379.28000000000003px;width:843px;height:20.12px;background:#ffffff;border-left:1px solid #eeeeee;border-right:1px solid #eeeeee"></div>
<div class="a" style="left:134px;top:379.28000000000003px;width:843px;height:1px;background:#ececec;"></div>
<div class="a" style="left:139px;top:384.98px;font-size:8.1px;line-height:9.72px;color:#3a3a3a;font-weight:bold;letter-spacing:0px;transform:scaleX(0.92);transform-origin:0 50%;">6</div>
<div class="a" style="left:219px;top:384.98px;font-size:8.1px;line-height:9.72px;color:#484848;font-weight:normal;letter-spacing:0px;transform:scaleX(0.885);transform-origin:0 50%;-webkit-text-stroke:0.12px #484848;">6</div>
<div class="a" style="left:299px;top:384.98px;font-size:8.1px;line-height:9.72px;color:#484848;font-weight:normal;letter-spacing:0px;transform:scaleX(0.885);transform-origin:0 50%;-webkit-text-stroke:0.12px #484848;">256QAM</div>
<div class="a" style="left:379.7px;top:384.98px;font-size:8.1px;line-height:9.72px;color:#484848;font-weight:normal;letter-spacing:0px;transform:scaleX(0.885);transform-origin:0 50%;-webkit-text-stroke:0.12px #484848;">530</div>
<div class="a" style="left:460px;top:384.98px;font-size:8.1px;line-height:9.72px;color:#484848;font-weight:normal;letter-spacing:0px;transform:scaleX(0.885);transform-origin:0 50%;-webkit-text-stroke:0.12px #484848;">0.3</div>
<div class="a" style="left:548.1px;top:384.98px;font-size:8.1px;line-height:9.72px;color:#484848;font-weight:normal;letter-spacing:0px;transform:scaleX(0.885);transform-origin:0 50%;-webkit-text-stroke:0.12px #484848;">-36.6</div>
<div class="a" style="left:636.4px;top:384.98px;font-size:8.1px;line-height:9.72px;color:#484848;font-weight:normal;letter-spacing:0px;transform:scaleX(0.885);transform-origin:0 50%;-webkit-text-stroke:0.12px #484848;">0.32</div>
<div class="a" style="left:724.7px;top:384.98px;font-size:8.1px;line-height:9.72px;color:#484848;font-weight:normal;letter-spacing:0px;transform:scaleX(0.885);transform-origin:0 50%;-webkit-text-stroke:0.12px #484848;">450</div>
<div class="a" style="left:852.2px;top:384.98px;font-size:8.1px;line-height:9.72px;color:#484848;font-weight:normal;letter-spacing:0px;transform:scaleX(0.885);transform-origin:0 50%;-webkit-text-stroke:0.12px #484848;">83</div>
<div class="a" style="left:134px;top:399.4px;width:843px;height:20.12px;background:#ffffff;border-left:1px solid #eeeeee;border-right:1px solid #eeeeee"></div>
<div class="a" style="left:134px;top:399.4px;width:843px;height:1px;background:#ececec;"></div>
<div class="a" style="left:139px;top:405.10px;font-size:8.1px;line-height:9.72px;color:#3a3a3a;font-weight:bold;letter-spacing:0px;transform:scaleX(0.92);transform-origin:0 50%;">7</div>
<div class="a" style="left:219px;top:405.10px;font-size:8.1px;line-height:9.72px;color:#484848;font-weight:normal;letter-spacing:0px;transform:scaleX(0.885);transform-origin:0 50%;-webkit-text-stroke:0.12px #484848;">7</div>
<div class="a" style="left:299px;top:405.10px;font-size:8.1px;line-height:9.72px;color:#484848;font-weight:normal;letter-spacing:0px;transform:scaleX(0.885);transform-origin:0 50%;-webkit-text-stroke:0.12px #484848;">256QAM</div>
<div class="a" style="left:379.7px;top:405.10px;font-size:8.1px;line-height:9.72px;color:#484848;font-weight:normal;letter-spacing:0px;transform:scaleX(0.885);transform-origin:0 50%;-webkit-text-stroke:0.12px #484848;">538</div>
<div class="a" style="left:460px;top:405.10px;font-size:8.1px;line-height:9.72px;color:#484848;font-weight:normal;letter-spacing:0px;transform:scaleX(0.885);transform-origin:0 50%;-webkit-text-stroke:0.12px #484848;">0.1</div>
<div class="a" style="left:548.1px;top:405.10px;font-size:8.1px;line-height:9.72px;color:#484848;font-weight:normal;letter-spacing:0px;transform:scaleX(0.885);transform-origin:0 50%;-webkit-text-stroke:0.12px #484848;">-36.6</div>
<div class="a" style="left:636.4px;top:405.10px;font-size:8.1px;line-height:9.72px;color:#484848;font-weight:normal;letter-spacing:0px;transform:scaleX(0.885);transform-origin:0 50%;-webkit-text-stroke:0.12px #484848;">0.32</div>
<div class="a" style="left:724.7px;top:405.10px;font-size:8.1px;line-height:9.72px;color:#484848;font-weight:normal;letter-spacing:0px;transform:scaleX(0.885);transform-origin:0 50%;-webkit-text-stroke:0.12px #484848;">702</div>
<div class="a" style="left:852.2px;top:405.10px;font-size:8.1px;line-height:9.72px;color:#484848;font-weight:normal;letter-spacing:0px;transform:scaleX(0.885);transform-origin:0 50%;-webkit-text-stroke:0.12px #484848;">99</div>
<div class="a" style="left:134px;top:419.52px;width:843px;height:20.12px;background:#ffffff;border-left:1px solid #eeeeee;border-right:1px solid #eeeeee"></div>
<div class="a" style="left:134px;top:419.52px;width:843px;height:1px;background:#ececec;"></div>
<div class="a" style="left:139px;top:425.22px;font-size:8.1px;line-height:9.72px;color:#3a3a3a;font-weight:bold;letter-spacing:0px;transform:scaleX(0.92);transform-origin:0 50%;">8</div>
<div class="a" style="left:219px;top:425.22px;font-size:8.1px;line-height:9.72px;color:#484848;font-weight:normal;letter-spacing:0px;transform:scaleX(0.885);transform-origin:0 50%;-webkit-text-stroke:0.12px #484848;">8</div>
<div class="a" style="left:299px;top:425.22px;font-size:8.1px;line-height:9.72px;color:#484848;font-weight:normal;letter-spacing:0px;transform:scaleX(0.885);transform-origin:0 50%;-webkit-text-stroke:0.12px #484848;">256QAM</div>
<div class="a" style="left:379.7px;top:425.22px;font-size:8.1px;line-height:9.72px;color:#484848;font-weight:normal;letter-spacing:0px;transform:scaleX(0.885);transform-origin:0 50%;-webkit-text-stroke:0.12px #484848;">546</div>
<div class="a" style="left:460px;top:425.22px;font-size:8.1px;line-height:9.72px;color:#484848;font-weight:normal;letter-spacing:0px;transform:scaleX(0.885);transform-origin:0 50%;-webkit-text-stroke:0.12px #484848;">-0.1</div>
<div class="a" style="left:548.1px;top:425.22px;font-size:8.1px;line-height:9.72px;color:#484848;font-weight:normal;letter-spacing:0px;transform:scaleX(0.885);transform-origin:0 50%;-webkit-text-stroke:0.12px #484848;">-36.4</div>
<div class="a" style="left:636.4px;top:425.22px;font-size:8.1px;line-height:9.72px;color:#484848;font-weight:normal;letter-spacing:0px;transform:scaleX(0.885);transform-origin:0 50%;-webkit-text-stroke:0.12px #484848;">0.32</div>
<div class="a" style="left:724.7px;top:425.22px;font-size:8.1px;line-height:9.72px;color:#484848;font-weight:normal;letter-spacing:0px;transform:scaleX(0.885);transform-origin:0 50%;-webkit-text-stroke:0.12px #484848;">441</div>
<div class="a" style="left:852.2px;top:425.22px;font-size:8.1px;line-height:9.72px;color:#484848;font-weight:normal;letter-spacing:0px;transform:scaleX(0.885);transform-origin:0 50%;-webkit-text-stroke:0.12px #484848;">62</div>
<div class="a" style="left:134px;top:439.64px;width:843px;height:20.12px;background:#ffffff;border-left:1px solid #eeeeee;border-right:1px solid #eeeeee"></div>
<div class="a" style="left:134px;top:439.64px;width:843px;height:1px;background:#ececec;"></div>
<div class="a" style="left:139px;top:445.34px;font-size:8.1px;line-height:9.72px;color:#3a3a3a;font-weight:bold;letter-spacing:0px;transform:scaleX(0.92);transform-origin:0 50%;">9</div>
<div class="a" style="left:219px;top:445.34px;font-size:8.1px;line-height:9.72px;color:#484848;font-weight:normal;letter-spacing:0px;transform:scaleX(0.885);transform-origin:0 50%;-webkit-text-stroke:0.12px #484848;">9</div>
<div class="a" style="left:299px;top:445.34px;font-size:8.1px;line-height:9.72px;color:#484848;font-weight:normal;letter-spacing:0px;transform:scaleX(0.885);transform-origin:0 50%;-webkit-text-stroke:0.12px #484848;">256QAM</div>
<div class="a" style="left:379.7px;top:445.34px;font-size:8.1px;line-height:9.72px;color:#484848;font-weight:normal;letter-spacing:0px;transform:scaleX(0.885);transform-origin:0 50%;-webkit-text-stroke:0.12px #484848;">554</div>
<div class="a" style="left:460px;top:445.34px;font-size:8.1px;line-height:9.72px;color:#484848;font-weight:normal;letter-spacing:0px;transform:scaleX(0.885);transform-origin:0 50%;-webkit-text-stroke:0.12px #484848;">0.2</div>
<div class="a" style="left:548.1px;top:445.34px;font-size:8.1px;line-height:9.72px;color:#484848;font-weight:normal;letter-spacing:0px;transform:scaleX(0.885);transform-origin:0 50%;-webkit-text-stroke:0.12px #484848;">-36.6</div>
<div class="a" style="left:636.4px;top:445.34px;font-size:8.1px;line-height:9.72px;color:#484848;font-weight:normal;letter-spacing:0px;transform:scaleX(0.885);transform-origin:0 50%;-webkit-text-stroke:0.12px #484848;">0.32</div>
<div class="a" style="left:724.7px;top:445.34px;font-size:8.1px;line-height:9.72px;color:#484848;font-weight:normal;letter-spacing:0px;transform:scaleX(0.885);transform-origin:0 50%;-webkit-text-stroke:0.12px #484848;">1406</div>
<div class="a" style="left:852.2px;top:445.34px;font-size:8.1px;line-height:9.72px;color:#484848;font-weight:normal;letter-spacing:0px;transform:scaleX(0.885);transform-origin:0 50%;-webkit-text-stroke:0.12px #484848;">61</div>
<div class="a" style="left:134px;top:459.76px;width:843px;height:20.12px;background:#ffffff;border-left:1px solid #eeeeee;border-right:1px solid #eeeeee"></div>
<div class="a" style="left:134px;top:459.76px;width:843px;height:1px;background:#ececec;"></div>
<div class="a" style="left:139px;top:465.46px;font-size:8.1px;line-height:9.72px;color:#3a3a3a;font-weight:bold;letter-spacing:0px;transform:scaleX(0.92);transform-origin:0 50%;">10</div>
<div class="a" style="left:219px;top:465.46px;font-size:8.1px;line-height:9.72px;color:#484848;font-weight:normal;letter-spacing:0px;transform:scaleX(0.885);transform-origin:0 50%;-webkit-text-stroke:0.12px #484848;">10</div>
<div class="a" style="left:299px;top:465.46px;font-size:8.1px;line-height:9.72px;color:#484848;font-weight:normal;letter-spacing:0px;transform:scaleX(0.885);transform-origin:0 50%;-webkit-text-stroke:0.12px #484848;">256QAM</div>
<div class="a" style="left:379.7px;top:465.46px;font-size:8.1px;line-height:9.72px;color:#484848;font-weight:normal;letter-spacing:0px;transform:scaleX(0.885);transform-origin:0 50%;-webkit-text-stroke:0.12px #484848;">562</div>
<div class="a" style="left:460px;top:465.46px;font-size:8.1px;line-height:9.72px;color:#484848;font-weight:normal;letter-spacing:0px;transform:scaleX(0.885);transform-origin:0 50%;-webkit-text-stroke:0.12px #484848;">0.1</div>
<div class="a" style="left:548.1px;top:465.46px;font-size:8.1px;line-height:9.72px;color:#484848;font-weight:normal;letter-spacing:0px;transform:scaleX(0.885);transform-origin:0 50%;-webkit-text-stroke:0.12px #484848;">-36.6</div>
<div class="a" style="left:636.4px;top:465.46px;font-size:8.1px;line-height:9.72px;color:#484848;font-weight:normal;letter-spacing:0px;transform:scaleX(0.885);transform-origin:0 50%;-webkit-text-stroke:0.12px #484848;">0.32</div>
<div class="a" style="left:724.7px;top:465.46px;font-size:8.1px;line-height:9.72px;color:#484848;font-weight:normal;letter-spacing:0px;transform:scaleX(0.885);transform-origin:0 50%;-webkit-text-stroke:0.12px #484848;">239</div>
<div class="a" style="left:852.2px;top:465.46px;font-size:8.1px;line-height:9.72px;color:#484848;font-weight:normal;letter-spacing:0px;transform:scaleX(0.885);transform-origin:0 50%;-webkit-text-stroke:0.12px #484848;">48</div>
<div class="a" style="left:134px;top:479.88px;width:843px;height:20.12px;background:#ffffff;border-left:1px solid #eeeeee;border-right:1px solid #eeeeee"></div>
<div class="a" style="left:134px;top:479.88px;width:843px;height:1px;background:#ececec;"></div>
<div class="a" style="left:139px;top:485.58px;font-size:8.1px;line-height:9.72px;color:#3a3a3a;font-weight:bold;letter-spacing:0px;transform:scaleX(0.92);transform-origin:0 50%;">11</div>
<div class="a" style="left:219px;top:485.58px;font-size:8.1px;line-height:9.72px;color:#484848;font-weight:normal;letter-spacing:0px;transform:scaleX(0.885);transform-origin:0 50%;-webkit-text-stroke:0.12px #484848;">11</div>
<div class="a" style="left:299px;top:485.58px;font-size:8.1px;line-height:9.72px;color:#484848;font-weight:normal;letter-spacing:0px;transform:scaleX(0.885);transform-origin:0 50%;-webkit-text-stroke:0.12px #484848;">256QAM</div>
<div class="a" style="left:379.7px;top:485.58px;font-size:8.1px;line-height:9.72px;color:#484848;font-weight:normal;letter-spacing:0px;transform:scaleX(0.885);transform-origin:0 50%;-webkit-text-stroke:0.12px #484848;">570</div>
<div class="a" style="left:460px;top:485.58px;font-size:8.1px;line-height:9.72px;color:#484848;font-weight:normal;letter-spacing:0px;transform:scaleX(0.885);transform-origin:0 50%;-webkit-text-stroke:0.12px #484848;">0.3</div>
<div class="a" style="left:548.1px;top:485.58px;font-size:8.1px;line-height:9.72px;color:#484848;font-weight:normal;letter-spacing:0px;transform:scaleX(0.885);transform-origin:0 50%;-webkit-text-stroke:0.12px #484848;">-37.4</div>
<div class="a" style="left:636.4px;top:485.58px;font-size:8.1px;line-height:9.72px;color:#484848;font-weight:normal;letter-spacing:0px;transform:scaleX(0.885);transform-origin:0 50%;-webkit-text-stroke:0.12px #484848;">0.32</div>
<div class="a" style="left:724.7px;top:485.58px;font-size:8.1px;line-height:9.72px;color:#484848;font-weight:normal;letter-spacing:0px;transform:scaleX(0.885);transform-origin:0 50%;-webkit-text-stroke:0.12px #484848;">407</div>
<div class="a" style="left:852.2px;top:485.58px;font-size:8.1px;line-height:9.72px;color:#484848;font-weight:normal;letter-spacing:0px;transform:scaleX(0.885);transform-origin:0 50%;-webkit-text-stroke:0.12px #484848;">36</div>
<div class="a" style="left:134px;top:500.0px;width:843px;height:20.12px;background:#ffffff;border-left:1px solid #eeeeee;border-right:1px solid #eeeeee"></div>
<div class="a" style="left:134px;top:500.0px;width:843px;height:1px;background:#ececec;"></div>
<div class="a" style="left:139px;top:505.70px;font-size:8.1px;line-height:9.72px;color:#3a3a3a;font-weight:bold;letter-spacing:0px;transform:scaleX(0.92);transform-origin:0 50%;">12</div>
<div class="a" style="left:219px;top:505.70px;font-size:8.1px;line-height:9.72px;color:#484848;font-weight:normal;letter-spacing:0px;transform:scaleX(0.885);transform-origin:0 50%;-webkit-text-stroke:0.12px #484848;">12</div>
<div class="a" style="left:299px;top:505.70px;font-size:8.1px;line-height:9.72px;color:#484848;font-weight:normal;letter-spacing:0px;transform:scaleX(0.885);transform-origin:0 50%;-webkit-text-stroke:0.12px #484848;">256QAM</div>
<div class="a" style="left:379.7px;top:505.70px;font-size:8.1px;line-height:9.72px;color:#484848;font-weight:normal;letter-spacing:0px;transform:scaleX(0.885);transform-origin:0 50%;-webkit-text-stroke:0.12px #484848;">578</div>
<div class="a" style="left:460px;top:505.70px;font-size:8.1px;line-height:9.72px;color:#484848;font-weight:normal;letter-spacing:0px;transform:scaleX(0.885);transform-origin:0 50%;-webkit-text-stroke:0.12px #484848;">0.4</div>
<div class="a" style="left:548.1px;top:505.70px;font-size:8.1px;line-height:9.72px;color:#484848;font-weight:normal;letter-spacing:0px;transform:scaleX(0.885);transform-origin:0 50%;-webkit-text-stroke:0.12px #484848;">-37.6</div>
<div class="a" style="left:636.4px;top:505.70px;font-size:8.1px;line-height:9.72px;color:#484848;font-weight:normal;letter-spacing:0px;transform:scaleX(0.885);transform-origin:0 50%;-webkit-text-stroke:0.12px #484848;">0.32</div>
<div class="a" style="left:724.7px;top:505.70px;font-size:8.1px;line-height:9.72px;color:#484848;font-weight:normal;letter-spacing:0px;transform:scaleX(0.885);transform-origin:0 50%;-webkit-text-stroke:0.12px #484848;">168</div>
<div class="a" style="left:852.2px;top:505.70px;font-size:8.1px;line-height:9.72px;color:#484848;font-weight:normal;letter-spacing:0px;transform:scaleX(0.885);transform-origin:0 50%;-webkit-text-stroke:0.12px #484848;">31</div>
<div class="a" style="left:134px;top:520.12px;width:843px;height:20.12px;background:#ffffff;border-left:1px solid #eeeeee;border-right:1px solid #eeeeee"></div>
<div class="a" style="left:134px;top:520.12px;width:843px;height:1px;background:#ececec;"></div>
<div class="a" style="left:139px;top:525.82px;font-size:8.1px;line-height:9.72px;color:#3a3a3a;font-weight:bold;letter-spacing:0px;transform:scaleX(0.92);transform-origin:0 50%;">13</div>
<div class="a" style="left:219px;top:525.82px;font-size:8.1px;line-height:9.72px;color:#484848;font-weight:normal;letter-spacing:0px;transform:scaleX(0.885);transform-origin:0 50%;-webkit-text-stroke:0.12px #484848;">13</div>
<div class="a" style="left:299px;top:525.82px;font-size:8.1px;line-height:9.72px;color:#484848;font-weight:normal;letter-spacing:0px;transform:scaleX(0.885);transform-origin:0 50%;-webkit-text-stroke:0.12px #484848;">256QAM</div>
<div class="a" style="left:379.7px;top:525.82px;font-size:8.1px;line-height:9.72px;color:#484848;font-weight:normal;letter-spacing:0px;transform:scaleX(0.885);transform-origin:0 50%;-webkit-text-stroke:0.12px #484848;">586</div>
<div class="a" style="left:460px;top:525.82px;font-size:8.1px;line-height:9.72px;color:#484848;font-weight:normal;letter-spacing:0px;transform:scaleX(0.885);transform-origin:0 50%;-webkit-text-stroke:0.12px #484848;">0.6</div>
<div class="a" style="left:548.1px;top:525.82px;font-size:8.1px;line-height:9.72px;color:#484848;font-weight:normal;letter-spacing:0px;transform:scaleX(0.885);transform-origin:0 50%;-webkit-text-stroke:0.12px #484848;">-37.4</div>
<div class="a" style="left:636.4px;top:525.82px;font-size:8.1px;line-height:9.72px;color:#484848;font-weight:normal;letter-spacing:0px;transform:scaleX(0.885);transform-origin:0 50%;-webkit-text-stroke:0.12px #484848;">0.32</div>
<div class="a" style="left:724.7px;top:525.82px;font-size:8.1px;line-height:9.72px;color:#484848;font-weight:normal;letter-spacing:0px;transform:scaleX(0.885);transform-origin:0 50%;-webkit-text-stroke:0.12px #484848;">246</div>
<div class="a" style="left:852.2px;top:525.82px;font-size:8.1px;line-height:9.72px;color:#484848;font-weight:normal;letter-spacing:0px;transform:scaleX(0.885);transform-origin:0 50%;-webkit-text-stroke:0.12px #484848;">14</div>
<div class="a" style="left:134px;top:540.24px;width:843px;height:20.12px;background:#ffffff;border-left:1px solid #eeeeee;border-right:1px solid #eeeeee"></div>
<div class="a" style="left:134px;top:540.24px;width:843px;height:1px;background:#ececec;"></div>
<div class="a" style="left:139px;top:545.94px;font-size:8.1px;line-height:9.72px;color:#3a3a3a;font-weight:bold;letter-spacing:0px;transform:scaleX(0.92);transform-origin:0 50%;">14</div>
<div class="a" style="left:219px;top:545.94px;font-size:8.1px;line-height:9.72px;color:#484848;font-weight:normal;letter-spacing:0px;transform:scaleX(0.885);transform-origin:0 50%;-webkit-text-stroke:0.12px #484848;">14</div>
<div class="a" style="left:299px;top:545.94px;font-size:8.1px;line-height:9.72px;color:#484848;font-weight:normal;letter-spacing:0px;transform:scaleX(0.885);transform-origin:0 50%;-webkit-text-stroke:0.12px #484848;">256QAM</div>
<div class="a" style="left:379.7px;top:545.94px;font-size:8.1px;line-height:9.72px;color:#484848;font-weight:normal;letter-spacing:0px;transform:scaleX(0.885);transform-origin:0 50%;-webkit-text-stroke:0.12px #484848;">594</div>
<div class="a" style="left:460px;top:545.94px;font-size:8.1px;line-height:9.72px;color:#484848;font-weight:normal;letter-spacing:0px;transform:scaleX(0.885);transform-origin:0 50%;-webkit-text-stroke:0.12px #484848;">0.6</div>
<div class="a" style="left:548.1px;top:545.94px;font-size:8.1px;line-height:9.72px;color:#484848;font-weight:normal;letter-spacing:0px;transform:scaleX(0.885);transform-origin:0 50%;-webkit-text-stroke:0.12px #484848;">-37.4</div>
<div class="a" style="left:636.4px;top:545.94px;font-size:8.1px;line-height:9.72px;color:#484848;font-weight:normal;letter-spacing:0px;transform:scaleX(0.885);transform-origin:0 50%;-webkit-text-stroke:0.12px #484848;">0.32</div>
<div class="a" style="left:724.7px;top:545.94px;font-size:8.1px;line-height:9.72px;color:#484848;font-weight:normal;letter-spacing:0px;transform:scaleX(0.885);transform-origin:0 50%;-webkit-text-stroke:0.12px #484848;">200</div>
<div class="a" style="left:852.2px;top:545.94px;font-size:8.1px;line-height:9.72px;color:#484848;font-weight:normal;letter-spacing:0px;transform:scaleX(0.885);transform-origin:0 50%;-webkit-text-stroke:0.12px #484848;">10</div>
<div class="a" style="left:126px;top:516.8px;width:859px;height:26.2px;background:rgba(255,255,255,0.82);border-top:1px solid #e9e9e9"></div>
<div class="a" style="left:916.3px;top:522.6px;width:58.6px;height:16.2px;background:#2a8ae0;"></div>
<div class="a" style="left:916.3px;top:523.9px;width:58.6px;height:15.8px;color:#fff;font-size:8.5px;line-height:15.8px;text-align:center;transform:scaleX(0.88)">Aktualisieren</div>
<div class="a" style="left:0px;top:103px;width:118px;height:291px;background:#ffffff;box-shadow:0.5px 1px 2.5px rgba(0,0,0,0.2)"></div>
<div class="a" style="left:0px;top:375.3px;width:118px;height:18.7px;background:#f4f3ef;"></div>
<div class="a" style="left:0px;top:230.2px;width:118px;height:18.3px;background:#2a8ae0;"></div>
<div class="a" style="left:20.7px;top:107.50px;font-size:9px;line-height:10.80px;color:#404040;font-weight:normal;letter-spacing:0px;transform:scaleX(0.93);transform-origin:0 50%;-webkit-text-stroke:0.2px #404040;">Übersicht</div>
<div class="a" style="left:20.7px;top:125.70px;font-size:9px;line-height:10.80px;color:#3a3a3a;font-weight:bold;letter-spacing:0px;transform:scaleX(0.912);transform-origin:0 50%;">Internet</div>
<div class="a" style="left:26.7px;top:144.50px;font-size:8px;line-height:9.60px;color:#404040;font-weight:normal;letter-spacing:0px;transform:scaleX(0.95);transform-origin:0 50%;-webkit-text-stroke:0.2px #404040;">Online-Monitor</div>
<div class="a" style="left:26.7px;top:162.70px;font-size:8px;line-height:9.60px;color:#404040;font-weight:normal;letter-spacing:0px;transform:scaleX(0.91);transform-origin:0 50%;-webkit-text-stroke:0.2px #404040;">Zugangsart</div>
<div class="a" style="left:26.7px;top:180.90px;font-size:8px;line-height:9.60px;color:#404040;font-weight:normal;letter-spacing:0px;transform:scaleX(0.93);transform-origin:0 50%;-webkit-text-stroke:0.2px #404040;">Filter</div>
<div class="a" style="left:26.7px;top:199.10px;font-size:8px;line-height:9.60px;color:#404040;font-weight:normal;letter-spacing:0px;transform:scaleX(0.905);transform-origin:0 50%;-webkit-text-stroke:0.2px #404040;">Freigaben</div>
<div class="a" style="left:26.7px;top:217.30px;font-size:8px;line-height:9.60px;color:#404040;font-weight:normal;letter-spacing:0px;transform:scaleX(0.885);transform-origin:0 50%;-webkit-text-stroke:0.2px #404040;">MyFRITZ!-Konto</div>
<div class="a" style="left:26.7px;top:235.50px;font-size:8px;line-height:9.60px;color:#ffffff;font-weight:normal;letter-spacing:0px;transform:scaleX(0.953);transform-origin:0 50%;-webkit-text-stroke:0.2px #ffffff;">Kabel-Informationen</div>
<div class="a" style="left:20.7px;top:253.10px;font-size:9px;line-height:10.80px;color:#404040;font-weight:normal;letter-spacing:0px;transform:scaleX(0.933);transform-origin:0 50%;-webkit-text-stroke:0.2px #404040;">Telefonie</div>
<div class="a" style="left:20.7px;top:271.30px;font-size:9px;line-height:10.80px;color:#404040;font-weight:normal;letter-spacing:0px;transform:scaleX(0.93);transform-origin:0 50%;-webkit-text-stroke:0.2px #404040;">Heimnetz</div>
<div class="a" style="left:20.7px;top:289.50px;font-size:9px;line-height:10.80px;color:#404040;font-weight:normal;letter-spacing:0px;transform:scaleX(0.815);transform-origin:0 50%;-webkit-text-stroke:0.2px #404040;">WLAN</div>
<div class="a" style="left:20.7px;top:307.70px;font-size:9px;line-height:10.80px;color:#404040;font-weight:normal;letter-spacing:0px;transform:scaleX(0.917);transform-origin:0 50%;-webkit-text-stroke:0.2px #404040;">Smart Home</div>
<div class="a" style="left:20.7px;top:325.90px;font-size:9px;line-height:10.80px;color:#404040;font-weight:normal;letter-spacing:0px;transform:scaleX(0.81);transform-origin:0 50%;-webkit-text-stroke:0.2px #404040;">DVB-C</div>
<div class="a" style="left:20.7px;top:344.10px;font-size:9px;line-height:10.80px;color:#404040;font-weight:normal;letter-spacing:0px;transform:scaleX(0.89);transform-origin:0 50%;-webkit-text-stroke:0.2px #404040;">Diagnose</div>
<div class="a" style="left:20.7px;top:362.30px;font-size:9px;line-height:10.80px;color:#404040;font-weight:normal;letter-spacing:0px;transform:scaleX(0.88);transform-origin:0 50%;-webkit-text-stroke:0.2px #404040;">System</div>
<div class="a" style="left:20.4px;top:380.50px;font-size:9px;line-height:10.80px;color:#404040;font-weight:normal;letter-spacing:0px;transform:scaleX(0.9);transform-origin:0 50%;-webkit-text-stroke:0.2px #404040;">Assistenten</div>
<svg class="a" style="left:106px;top:128px" width="10" height="5" viewBox="0 0 10 5"><path d="M1.4 3.6L5.1 1.2 8.6 3.6" fill="none" stroke="#555" stroke-width="0.95"/></svg>
<svg class="a" style="left:2.5px;top:105.7px" width="13" height="13" viewBox="0 0 13 13"><path d="M2 6.5L6.5 2 11 6.5V11.5H2Z" fill="none" stroke="#9fb3bd" stroke-width="1"/><rect x="5.2" y="8.3" width="2.6" height="3.2" fill="#9fb3bd"/></svg>
<svg class="a" style="left:3px;top:123.80000000000001px" width="13" height="13" viewBox="0 0 13 13"><circle cx="6.4" cy="6.5" r="5.9" fill="#fff" stroke="#a6b8c2" stroke-width="1.05"/><path d="M5 3.6C6.5 2.6 8 2.4 9.3 2.6 10.8 3.6 11.6 5 11.9 6.8L9.8 8.4 8.3 11.8 6.6 12.1 6.8 9.2 4.6 7.6 4.7 5.4z" fill="#a6b8c2"/></svg>
<svg class="a" style="left:3px;top:251.5px" width="13" height="13" viewBox="0 0 13 13"><path d="M2.3 1.8C1.8 4.8 4.8 9.4 8.8 10.4L10.4 9.9 10.7 8.6 8.8 7.4 7.6 8.1C6 7.3 4.6 5.7 4 4.3L4.8 3.2 3.9 1.1 2.9 1.2Z" fill="#9fb3bd"/></svg>
<svg class="a" style="left:3px;top:269.7px" width="13" height="13" viewBox="0 0 13 13"><rect x="5.5" y="0.8" width="6.8" height="5.2" fill="none" stroke="#9fb3bd" stroke-width="1"/><rect x="0.5" y="4.3" width="7.2" height="5.2" fill="#fff" stroke="#9fb3bd" stroke-width="1"/><path d="M4.1 9.5v1.6M2.3 11.3h3.6" fill="none" stroke="#9fb3bd" stroke-width="1"/></svg>
<svg class="a" style="left:3px;top:288.1px" width="13" height="13" viewBox="0 0 13 13"><path d="M1.3 3.4A7.5 7.5 0 0 1 11.7 3.4M2.6 5A5.6 5.6 0 0 1 10.4 5M3.9 6.5A3.7 3.7 0 0 1 9.1 6.5M5.2 8A1.8 1.8 0 0 1 7.8 8" fill="none" stroke="#9fb3bd" stroke-width="1"/><circle cx="6.5" cy="10.2" r="1" fill="#9fb3bd"/></svg>
<svg class="a" style="left:2.5px;top:306.1px" width="13" height="13" viewBox="0 0 13 13"><path d="M1.5 5L7 0.9 12.5 5V10.6H1.5Z" fill="none" stroke="#9fb3bd" stroke-width="1"/><path d="M5.3 5.3A2.3 2.3 0 1 0 8.7 5.3M7 3.9V6.6" fill="none" stroke="#9fb3bd" stroke-width="1"/></svg>
<svg class="a" style="left:3px;top:324.5px" width="13" height="13" viewBox="0 0 13 13"><rect x="1.2" y="1.3" width="10.4" height="7" rx=".6" fill="none" stroke="#9fb3bd" stroke-width="1"/><path d="M5.3 3.1v3.4L8.1 4.8z" fill="#9fb3bd"/><path d="M6.4 8.3v1.6M4 10.2h4.8" fill="none" stroke="#9fb3bd" stroke-width="1"/></svg>
<svg class="a" style="left:3px;top:342.5px" width="13" height="13" viewBox="0 0 13 13"><circle cx="4.8" cy="5.2" r="3.8" fill="none" stroke="#9fb3bd" stroke-width="1"/><path d="M7.5 7.9L10.6 10.6M1.2 5.6h1.6L4 3.8 5.3 6.6 6.3 5.2h1.2M10 5.6h2" fill="none" stroke="#9fb3bd" stroke-width="1"/></svg>
<svg class="a" style="left:3px;top:360.4px" width="13" height="13" viewBox="0 0 13 13"><circle cx="6.5" cy="6.5" r="5" fill="none" stroke="#9fb3bd" stroke-width="1" stroke-dasharray="2.5 1.2"/><circle cx="6.5" cy="6.5" r="2.2" fill="#9fb3bd"/></svg>
<svg class="a" style="left:3px;top:379.1px" width="13" height="13" viewBox="0 0 13 13"><path d="M1.2 8.2l1.6 1.4-1.6 1.4M4.4 8.2L6 9.6 4.4 11" stroke="#9fb3bd" stroke-width="1.2" fill="none"/><path d="M10.6 1.5h1.4v9.6h-1.4zM10.6 1.8L7.6 4.4 10.6 5z" fill="#9fb3bd"/><rect x="7.6" y="8.3" width="1.3" height="2.8" fill="#9fb3bd"/></svg>
<div class="a" style="left:7.2px;top:503.54px;font-size:7.1px;line-height:8.52px;color:#a7a39b;font-weight:normal;letter-spacing:0px;transform:scaleX(0.88);transform-origin:0 50%;-webkit-text-stroke:0.15px #a7a39b;">Ansicht: Standard</div>
<div class="a" style="left:63px;top:503.54px;font-size:7.1px;line-height:8.52px;color:#a7a39b;font-weight:normal;letter-spacing:0px;transform:scaleX(0.88);transform-origin:0 50%;-webkit-text-stroke:0.15px #a7a39b;">Inhalt</div>
<div class="a" style="left:85.6px;top:503.54px;font-size:7.1px;line-height:8.52px;color:#a7a39b;font-weight:normal;letter-spacing:0px;transform:scaleX(0.88);transform-origin:0 50%;-webkit-text-stroke:0.15px #a7a39b;">Handbuch</div>
<div class="a" style="left:22.7px;top:514.84px;font-size:7.1px;line-height:8.52px;color:#a7a39b;font-weight:normal;letter-spacing:0px;transform:scaleX(0.88);transform-origin:0 50%;-webkit-text-stroke:0.15px #a7a39b;">Rechtliches</div>
<div class="a" style="left:61.4px;top:514.84px;font-size:7.1px;line-height:8.52px;color:#a7a39b;font-weight:normal;letter-spacing:0px;transform:scaleX(0.88);transform-origin:0 50%;-webkit-text-stroke:0.15px #a7a39b;">Tipps &amp; Tricks</div>
<div class="a" style="left:32.5px;top:526.24px;font-size:7.1px;line-height:8.52px;color:#a7a39b;font-weight:normal;letter-spacing:0px;transform:scaleX(0.88);transform-origin:0 50%;-webkit-text-stroke:0.15px #a7a39b;">Newsletter</div>
<div class="a" style="left:69.1px;top:526.24px;font-size:7.1px;line-height:8.52px;color:#a7a39b;font-weight:normal;letter-spacing:0px;transform:scaleX(0.88);transform-origin:0 50%;-webkit-text-stroke:0.15px #a7a39b;">avm.de</div>
<div class="a" style="left:992px;top:44px;width:7px;height:499px;background:#ebebeb;"></div>
<div class="a" style="left:992px;top:44px;width:7px;height:7px;background:#f0f0f0;"></div>
<div class="a" style="left:992.5px;top:51px;width:6.5px;height:213px;background:#cdcdcd;"></div>
<svg class="a" style="left:993.5px;top:45.5px" width="4" height="3" viewBox="0 0 8 6"><path d="M1 5L4 1.5 7 5" fill="none" stroke="#444" stroke-width="1.5"/></svg>
<svg class="a" style="left:993.5px;top:538.5px" width="4" height="3" viewBox="0 0 8 6"><path d="M1 1L4 4.5 7 1" fill="none" stroke="#444" stroke-width="1.5"/></svg>
<div class="a" style="left:0px;top:543px;width:999px;height:19px;background:#c9eff0;"></div>
<div class="a" style="left:143.2px;top:544.5px;width:14.3px;height:16.5px;background:rgba(255,255,255,0.45);border-radius:2px"></div>
<div class="a" style="left:147.3px;top:559.6px;width:6px;height:1.1px;background:#2c7f92;border-radius:1px"></div>
<svg class="a" style="left:7.4px;top:547.4px" width="10" height="10" viewBox="0 0 10 10"><rect x="0.5" y="0.5" width="4.3" height="4.3" fill="#1e88e5"/><rect x="5.2" y="0.5" width="4.3" height="4.3" fill="#1e88e5"/><rect x="0.5" y="5.2" width="4.3" height="4.3" fill="#1e88e5"/><rect x="5.2" y="5.2" width="4.3" height="4.3" fill="#1e88e5"/></svg>
<svg class="a" style="left:24.9px;top:547.4px" width="10" height="10" viewBox="0 0 10 10"><circle cx="5.8" cy="4.2" r="3" fill="none" stroke="#222" stroke-width="1.1"/><path d="M3.8 6.3L1 9.2" stroke="#222" stroke-width="1.3"/></svg>
<svg class="a" style="left:41.8px;top:547.4px" width="10" height="10" viewBox="0 0 10 10"><rect x="3.5" y="1.5" width="5.5" height="5" fill="#bbb"/><rect x="1" y="4" width="5.5" height="5" fill="#222"/></svg>
<svg class="a" style="left:59.400000000000006px;top:547.4px" width="10" height="10" viewBox="0 0 10 10"><rect x="1" y="1" width="8" height="8" rx="1" fill="#1e6fd0"/><rect x="2" y="2" width="2.5" height="6" fill="#fff"/><rect x="5.5" y="2" width="2.5" height="6" fill="#cfe6ff"/></svg>
<svg class="a" style="left:76.3px;top:547.4px" width="10" height="10" viewBox="0 0 10 10"><circle cx="5.2" cy="4.8" r="4" fill="#7b68d8"/><path d="M2 8l-1 1.5 2.5-.5z" fill="#7b68d8"/><rect x="3.3" y="3.5" width="3" height="2.5" fill="#fff"/></svg>
<svg class="a" style="left:93.5px;top:547.4px" width="10" height="10" viewBox="0 0 10 10"><rect x="1" y="2.5" width="8" height="7" rx="1" fill="#1a4f9c"/><path d="M3.5 2.5V1.5h3v1" fill="none" stroke="#2f8ae0" stroke-width=".7"/><rect x="3.5" y="4" width="1.3" height="1.3" fill="#f25022"/><rect x="5.2" y="4" width="1.3" height="1.3" fill="#7fba00"/><rect x="3.5" y="5.7" width="1.3" height="1.3" fill="#00a4ef"/><rect x="5.2" y="5.7" width="1.3" height="1.3" fill="#ffb900"/></svg>
<svg class="a" style="left:110.8px;top:547.4px" width="10" height="10" viewBox="0 0 10 10"><path d="M0.5 2h3.5l1 1h4.5v6h-9z" fill="#f5c242"/><rect x="0.5" y="4" width="9" height="5" fill="#ffd766"/><rect x="3" y="6.5" width="4" height="1.2" fill="#2a7bd1"/></svg>
<svg class="a" style="left:128.0px;top:547.4px" width="10" height="10" viewBox="0 0 10 10"><circle cx="5" cy="5" r="4.5" fill="#1f8fdc"/><path d="M1 6.5C1.5 8.5 3.3 9.6 5.2 9.5 7 9.4 8.6 8.3 9.3 6.8 8 7.6 6 7.6 4.8 6.8 3.6 6 3.6 4.6 4.4 3.9 2.6 4 1.3 4.9 1 6.5z" fill="#43c86a"/><path d="M3.8 5.3c.3-1.3 1.5-2 2.7-1.9 1.3.1 2.3 1 2.4 2.2H4.7" fill="#0c5fb0"/></svg>
<svg class="a" style="left:145.2px;top:547.4px" width="10" height="10" viewBox="0 0 10 10"><circle cx="5" cy="5.2" r="4.3" fill="#ff7139"/><circle cx="5" cy="5.5" r="2.5" fill="#7542e5"/><path d="M2 2.5c1-1.5 3-2 4.5-1.5 1 .5 1.5 1.5 1.5 1.5C7 2 5.5 2 4.5 3z" fill="#ffbd4f"/></svg>
<svg class="a" style="left:162.5px;top:547.4px" width="10" height="10" viewBox="0 0 10 10"><circle cx="5" cy="5" r="4.3" fill="#1a1a1a"/><circle cx="5" cy="5" r="3.3" fill="#d41e2b"/><path d="M3.3 4.5h3.4v1.5H3.3z" fill="#1a1a1a"/></svg>
<svg class="a" style="left:179.7px;top:547.4px" width="10" height="10" viewBox="0 0 10 10"><rect x="0.5" y="1.5" width="9" height="7" rx=".8" fill="#4fa6e8"/><path d="M1 8l3-3.5 2 2 1.5-1.5L9.5 8z" fill="#e8c35a"/></svg>
<svg class="a" style="left:196.7px;top:547.4px" width="10" height="10" viewBox="0 0 10 10"><circle cx="5" cy="5" r="4.6" fill="#3a4d8f"/><circle cx="5" cy="5" r="3.4" fill="#8aa2d8"/><path d="M4 2.5h1.5c1 0 1.5.6 1.5 1.3S6.3 5 6.3 5c.7.2 1 .8 1 1.4 0 .8-.7 1.4-1.6 1.4H4z" fill="#3a4d8f"/></svg>
<svg class="a" style="left:213.5px;top:547.4px" width="10" height="10" viewBox="0 0 10 10"><rect x="0.5" y="0.8" width="9" height="8.4" rx=".8" fill="#8fc3e8"/><circle cx="5" cy="5" r="3" fill="#f07a1a"/><path d="M4.2 3.5v3l2.5-1.5z" fill="#fff"/></svg>
<svg class="a" style="left:230.8px;top:547.4px" width="10" height="10" viewBox="0 0 10 10"><defs><linearGradient id="stg" x1="0" y1="0" x2="0" y2="1"><stop offset="0" stop-color="#111d4a"/><stop offset="1" stop-color="#1a6db5"/></linearGradient></defs><circle cx="5" cy="5" r="4.4" fill="url(#stg)"/><circle cx="6.6" cy="3.9" r="1.5" fill="none" stroke="#fff" stroke-width=".8"/><path d="M0.8 5.8L3.3 6.8 6 4.5" stroke="#fff" stroke-width="1.1" fill="none"/></svg>
<div class="a" style="left:183.5px;top:559px;width:2.4px;height:0.9px;background:#6a6a6a;"></div>
<div class="a" style="left:200.5px;top:559px;width:2.4px;height:0.9px;background:#6a6a6a;"></div>
<div class="a" style="left:217.3px;top:559px;width:2.4px;height:0.9px;background:#6a6a6a;"></div>
<div class="a" style="left:234.60000000000002px;top:559px;width:2.4px;height:0.9px;background:#6a6a6a;"></div>
<svg class="a" style="left:913.4px;top:550.3px" width="6" height="4" viewBox="0 0 12 8"><path d="M1 7L6 2l5 5" fill="none" stroke="#222" stroke-width="1.5"/></svg>
<svg class="a" style="left:925px;top:548.5px" width="4.6" height="7" viewBox="0 0 8 12"><rect x="2.3" y="0.5" width="3.4" height="7" rx="1.7" fill="#8fb3c0"/><path d="M1 5.5a3 3 0 0 0 6 0M4 8.5V11" fill="none" stroke="#8fb3c0" stroke-width="1"/></svg>
<svg class="a" style="left:935.6px;top:548.6px" width="7" height="7" viewBox="0 0 12 12"><rect x="0.8" y="2" width="8.5" height="6.5" fill="none" stroke="#333" stroke-width="1.2"/><path d="M3 11h4.5M5.2 8.5V11" stroke="#333" stroke-width="1.1"/><circle cx="10" cy="2" r="1.6" fill="#333"/></svg>
<svg class="a" style="left:946px;top:549px" width="6.5" height="6.5" viewBox="0 0 12 12"><path d="M1 4.3h2.5L6.5 1.5v9L3.5 7.7H1z" fill="none" stroke="#333" stroke-width="1.1"/><path d="M8.3 4a3 3 0 0 1 0 4M10 2.5a5 5 0 0 1 0 7" fill="none" stroke="#333" stroke-width="1"/></svg>
<div class="a" style="left:950px;top:547.2px;width:30.3px;text-align:right;font-size:4.6px;line-height:6px;color:#1a1a1a">20:28</div>
<div class="a" style="left:950px;top:553.1px;width:30.3px;text-align:right;font-size:4.6px;line-height:6px;color:#1a1a1a">07.02.2022</div>
<div class="a" style="left:984.8px;top:549.4px;width:6.4px;height:6.4px;border-radius:50%;background:#137a8c;color:#fff;font-size:4px;line-height:6.4px;text-align:center">5</div>
</body></html>
